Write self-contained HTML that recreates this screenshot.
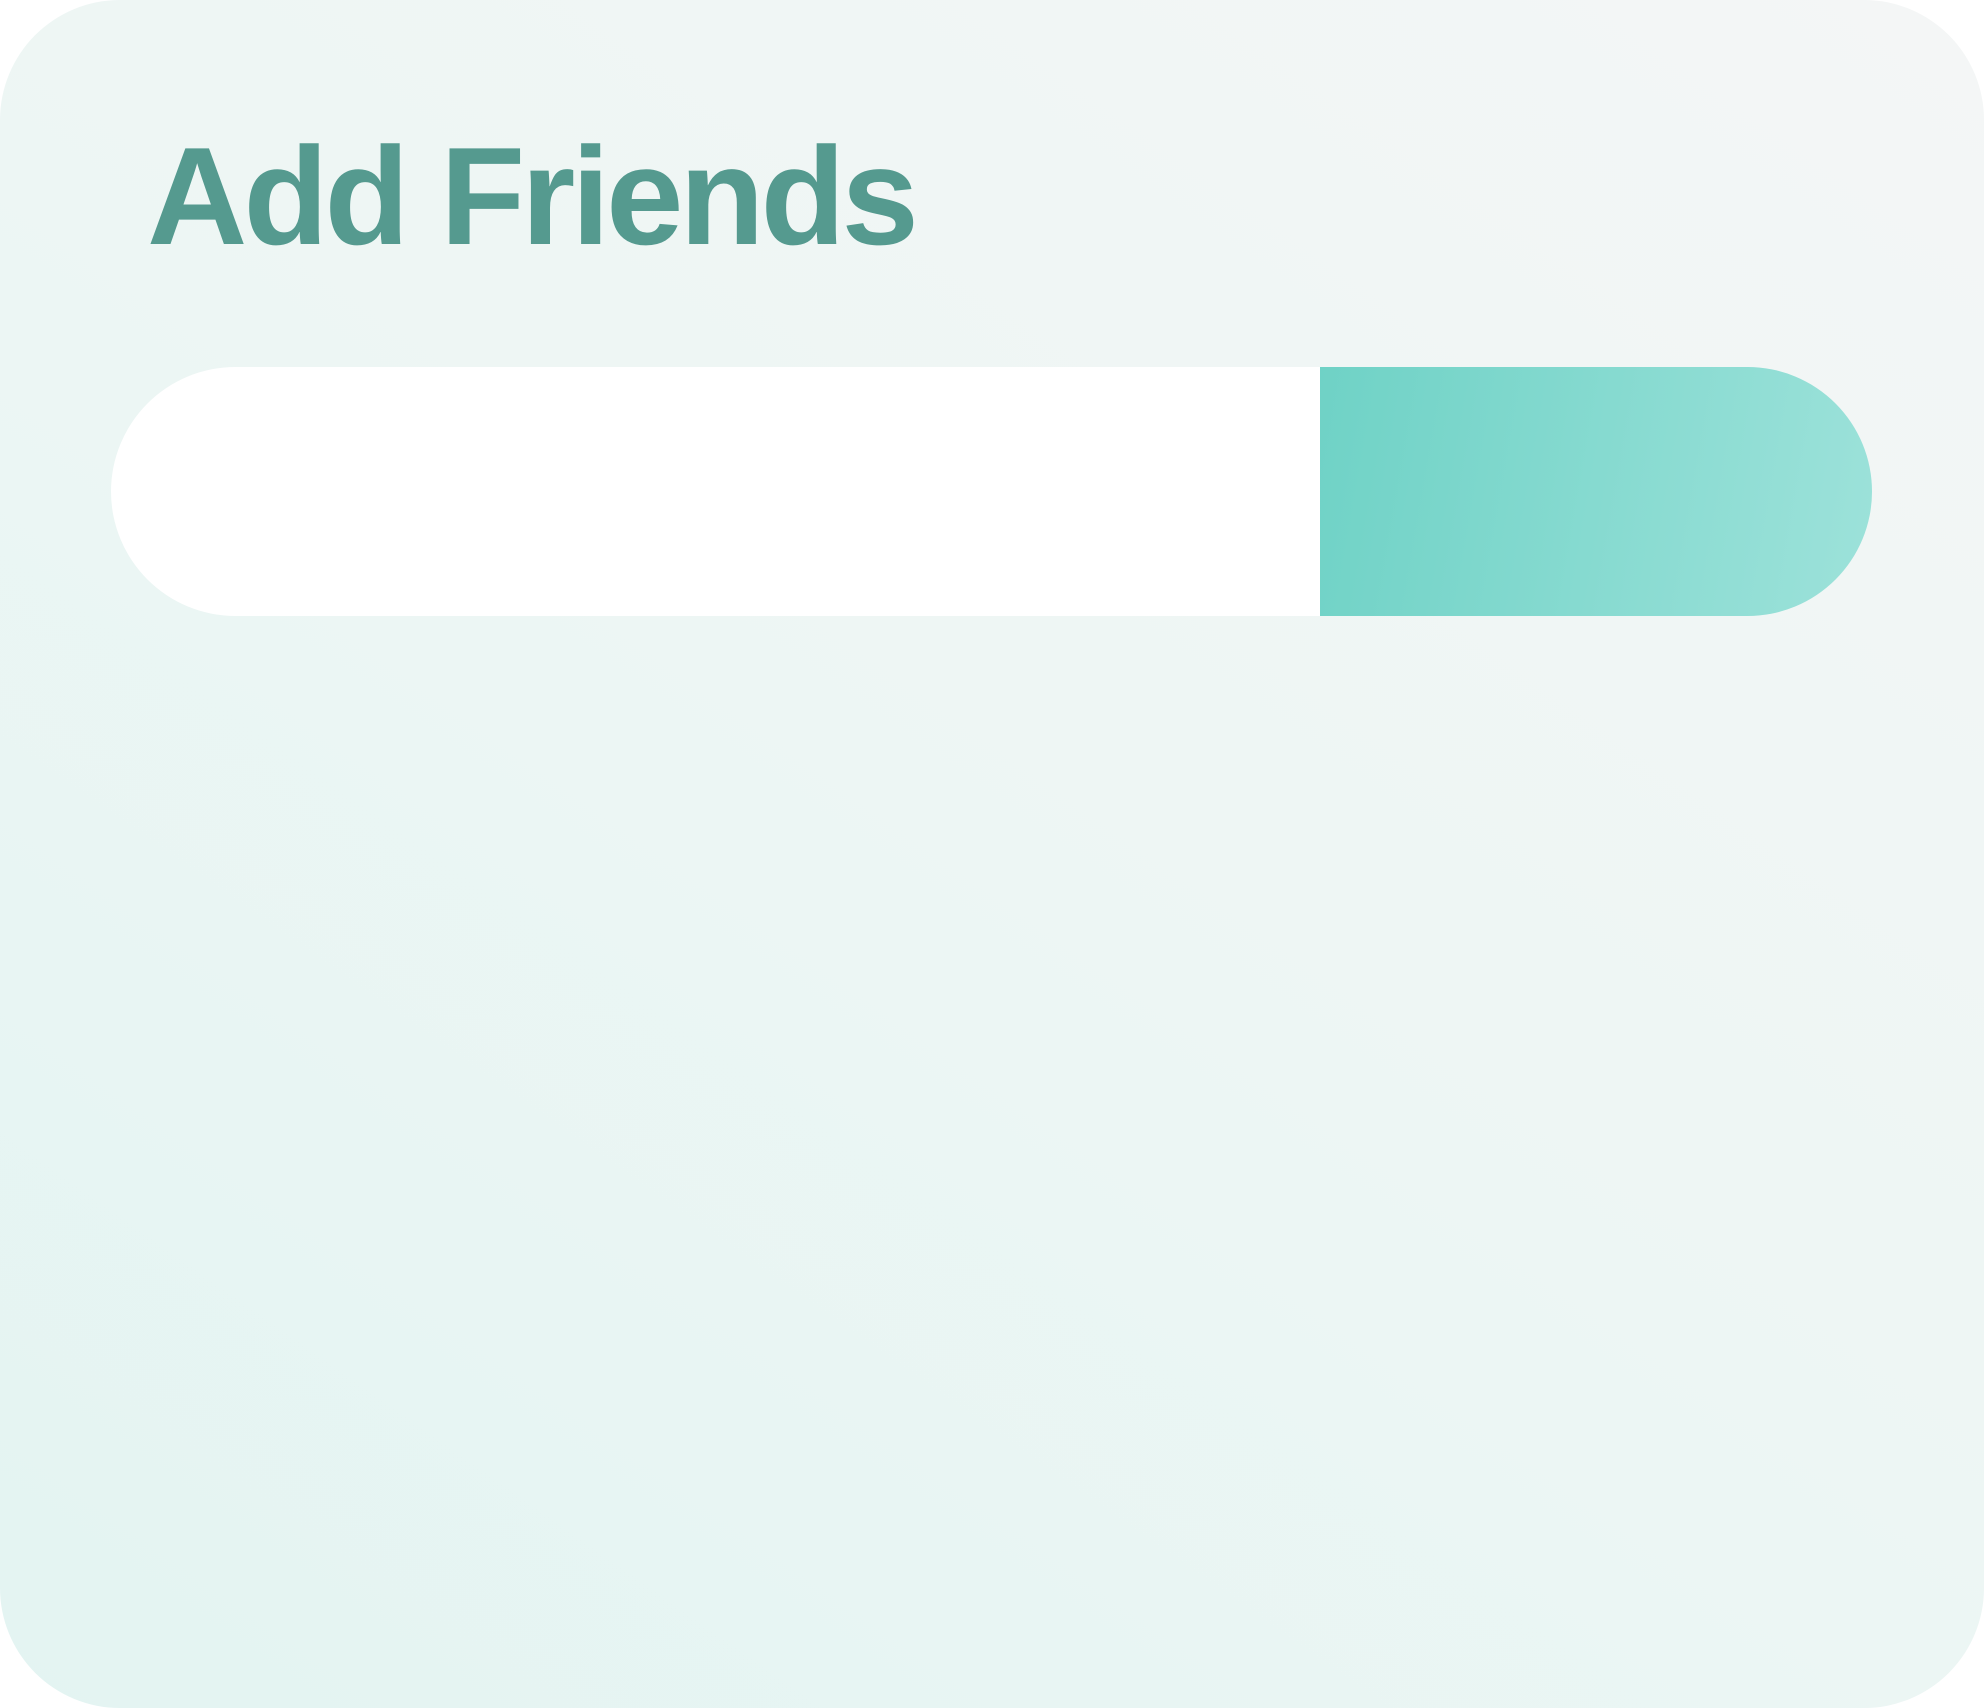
<!DOCTYPE html>
<html><head><style>
html,body{margin:0;padding:0;width:1984px;height:1708px;background:#fff;overflow:hidden}
.card{position:absolute;left:0;top:0;width:1984px;height:1708px;border-radius:120px;background:linear-gradient(35deg,#e3f4f2 0%,#edf6f4 50%,#f4f6f6 100%)}
h1{position:absolute;left:147px;top:117px;margin:0;font-family:"Liberation Sans",sans-serif;font-weight:bold;font-size:139px;line-height:160px;color:#559a8f;letter-spacing:-3.9px}
.inp{position:absolute;left:111px;top:367px;width:1209px;height:249px;background:#fff;border-radius:125px 0 0 125px}
.btn{position:absolute;left:1320px;top:367px;width:552px;height:249px;border-radius:0 125px 125px 0;background:linear-gradient(100deg,#6fd2c6 0%,#9de2da 100%)}
</style></head><body>
<div class="card"></div>
<h1>Add Friends</h1>
<div class="inp"></div>
<div class="btn"></div>
</body></html>
